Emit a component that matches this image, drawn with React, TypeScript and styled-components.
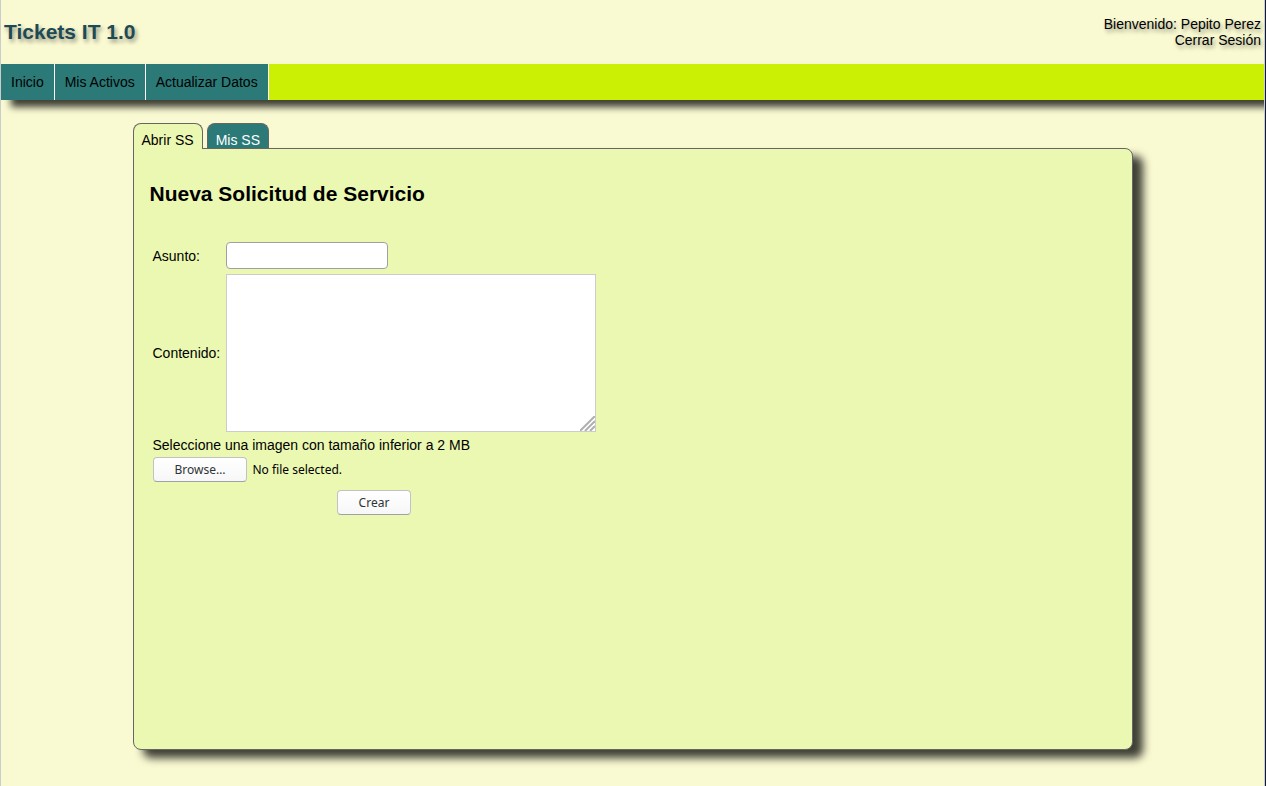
import React, { useId, useRef, useState } from "react";
import styled, { createGlobalStyle } from "styled-components";

const teal = "#2b7a78";
const cream = "#f9f9d2";
const lime = "#ebf8b2";
const line = "#666666";
const shadow = "rgba(0, 0, 0, 0.75)";

const GlobalStyle = createGlobalStyle`
  *, *::before, *::after { box-sizing: border-box; }
  body {
    margin: 0;
    background: #0c1c3a;
    color: #000;
    font: 14px/16px "Liberation Sans", Arial, sans-serif;
  }
`;

const Page = styled.div`
  min-height: 100vh;
  margin-right: 1px;
  padding-bottom: 36px;
  overflow: hidden;
  background: ${cream};
  border: solid #cccccc;
  border-width: 0 1px;
`;

const Header = styled.header`
  display: flex;
  justify-content: space-between;
  align-items: center;
  height: 64px;
  padding: 0 3px;
  text-shadow: 2px 3px 4px rgba(0, 0, 0, 0.4);
`;

const Brand = styled.h1`
  margin: 0;
  color: #1d4a54;
  font-size: 21px;
  line-height: 24px;
`;

const Session = styled.div`
  text-align: right;
`;

const SessionLink = styled.a`
  display: block;
  color: inherit;
  text-decoration: none;
`;

const NavBar = styled.nav`
  display: flex;
  height: 36px;
  background: #ccf003;
  box-shadow: 10px 7px 7px ${shadow};
`;

const NavLink = styled.a`
  padding: 10px;
  background: ${teal};
  border-right: 1px solid #ffffff;
  color: #000;
  text-decoration: none;
`;

const Content = styled.main`
  max-width: 1000px;
  margin: 23px auto 0;
`;

const TabList = styled.div`
  display: flex;
  gap: 4px;
`;

const Tab = styled.button<{ $active: boolean }>`
  position: relative;
  z-index: 1;
  height: ${(p) => (p.$active ? 26 : 25)}px;
  margin-bottom: ${(p) => (p.$active ? -1 : 0)}px;
  padding: 8px 8px ${(p) => (p.$active ? 1 : 0)}px;
  background: ${(p) => (p.$active ? lime : teal)};
  border: 1px solid ${line};
  border-bottom: 0;
  border-radius: 8px 8px 0 0;
  color: ${(p) => (p.$active ? "#000" : "#fff")};
  font: inherit;
`;

const Panel = styled.section`
  min-height: 602px;
  padding: 33px 16px 16px;
  background: ${lime};
  border: 1px solid ${line};
  border-radius: 0 8px 8px 8px;
  box-shadow: 10px 8px 8px ${shadow};
`;

const Title = styled.h2`
  margin: 0 0 36px;
  font-size: 21px;
  line-height: 24px;
`;

const Form = styled.form`
  padding-left: 3px;
`;

const Fields = styled.div`
  display: grid;
  grid-template-columns: 69px 370px;
  gap: 5px 4px;
  align-items: center;
`;

const TextInput = styled.input`
  width: 162px;
  height: 27px;
  padding: 4px 6px;
  background: #fff;
  border: 1px solid #a0a0a4;
  border-radius: 4px;
  font: inherit;
`;

const FieldLabel = styled.label`
  white-space: nowrap;
`;

const ContentArea = styled.div`
  position: relative;
  height: 158px;
`;

const TextArea = styled.textarea`
  display: block;
  width: 100%;
  height: 100%;
  padding: 4px;
  background: #fff;
  border: 1px solid #cccccc;
  font: inherit;
  resize: none;
`;

const Grip = styled.svg`
  position: absolute;
  right: 1px;
  bottom: 1px;
  pointer-events: none;
`;

const Hint = styled.label`
  display: block;
  padding: 5px 0 4px;
`;

const FileRow = styled.div`
  display: flex;
  align-items: center;
  gap: 5px;
`;

const Submit = styled.div`
  display: flex;
  justify-content: center;
  width: 443px;
  padding-top: 8px;
`;

const Button = styled.button`
  height: 25px;
  padding: 0 21px;
  background: linear-gradient(#ffffff, #f7f7f8);
  border: 1px solid #c2c2c6;
  border-bottom-color: #a0a0a6;
  border-radius: 4px;
  color: #2e3436;
  font: 12px/16px "Noto Sans", sans-serif;
`;

const FileName = styled.span`
  font: 12px/16px "Noto Sans", sans-serif;
`;

export default function App() {
  const id = useId();
  const picker = useRef<HTMLInputElement>(null);
  const [tab, setTab] = useState(0);
  const [file, setFile] = useState("");

  return (
    <>
      <GlobalStyle />
      <Page>
        <Header>
          <Brand>Tickets IT 1.0</Brand>
          <Session>
            Bienvenido: Pepito Perez
            <SessionLink href="#salir">Cerrar Sesión</SessionLink>
          </Session>
        </Header>
        <NavBar>
          <NavLink href="#inicio">Inicio</NavLink>
          <NavLink href="#activos">Mis Activos</NavLink>
          <NavLink href="#datos">Actualizar Datos</NavLink>
        </NavBar>
        <Content>
          <TabList role="tablist">
            {["Abrir SS", "Mis SS"].map((name, i) => (
              <Tab
                key={name}
                type="button"
                role="tab"
                aria-selected={tab === i}
                $active={tab === i}
                onClick={() => setTab(i)}
              >
                {name}
              </Tab>
            ))}
          </TabList>
          <Panel role="tabpanel">
            {tab === 0 && (
              <>
                <Title>Nueva Solicitud de Servicio</Title>
                <Form onSubmit={(e) => e.preventDefault()}>
                  <Fields>
                    <FieldLabel htmlFor={id + "subject"}>Asunto:</FieldLabel>
                    <TextInput id={id + "subject"} type="text" />
                    <FieldLabel htmlFor={id + "body"}>Contenido:</FieldLabel>
                    <ContentArea>
                      <TextArea id={id + "body"} />
                      <Grip width="15" height="15" viewBox="0 0 15 15" aria-hidden="true">
                        <path d="M0 15 15 0M5 15 15 5M10 15 15 10" stroke="#b0b0b0" strokeWidth="2" />
                      </Grip>
                    </ContentArea>
                  </Fields>
                  <Hint htmlFor={id + "file"}>
                    Seleccione una imagen con tamaño inferior a 2 MB
                  </Hint>
                  <FileRow>
                    <input
                      id={id + "file"}
                      ref={picker}
                      type="file"
                      accept="image/*"
                      hidden
                      onChange={(e) => setFile(e.target.files?.[0]?.name ?? "")}
                    />
                    <Button type="button" onClick={() => picker.current?.click()}>
                      Browse…
                    </Button>
                    <FileName>{file || "No file selected."}</FileName>
                  </FileRow>
                  <Submit>
                    <Button type="submit">Crear</Button>
                  </Submit>
                </Form>
              </>
            )}
          </Panel>
        </Content>
      </Page>
    </>
  );
}
